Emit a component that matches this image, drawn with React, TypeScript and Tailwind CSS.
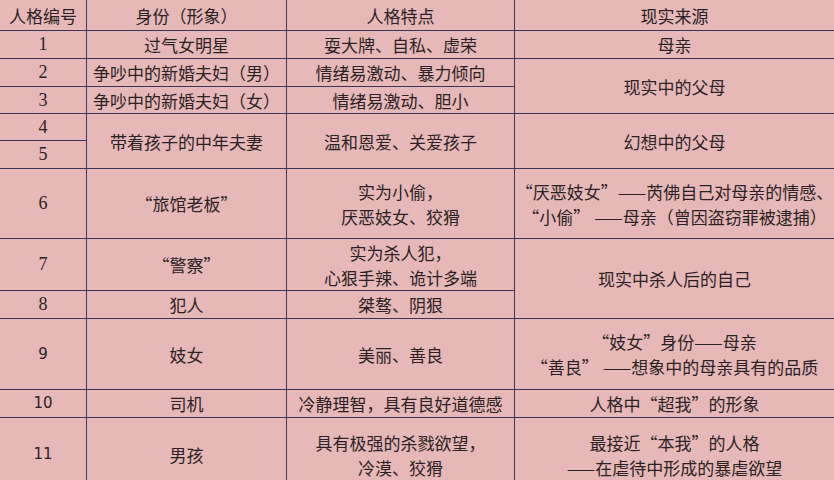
import type { ReactNode } from 'react';

type CellProps = {
  children?: ReactNode;
  className?: string;
  last?: boolean;
  bottom?: boolean;
};

// one grid cell; borders only on the inner edges, the outer frame is cut off in the picture
const Cell = ({ children, className = '', last = false, bottom = true }: CellProps) => (
  <div
    className={`flex flex-col items-center justify-center text-center whitespace-nowrap overflow-hidden ${
      last ? '' : 'border-r'
    } ${bottom ? 'border-b' : ''} border-[#3d3556] ${className}`}
  >
    {children}
  </div>
);

const Num = ({ n, sans = false, bottom = true }: { n: string; sans?: boolean; bottom?: boolean }) => (
  <Cell
    bottom={bottom}
    className={
      sans
        ? "font-['DejaVu_Sans',sans-serif] text-[15px]"
        : "font-['Liberation_Serif',serif] text-[18px]"
    }
  >
    {n}
  </Cell>
);

const App = () => {
  return (
    <div className="w-[834px] h-[480px] overflow-hidden bg-[#e6b8b7]">
      <div
        className="grid w-[834px] grid-cols-[87px_200px_228px_1fr] grid-rows-[31px_28px_28px_27px_27px_28px_70px_52px_28px_71px_28px_73px] text-[17px] leading-[25px] text-[#2b2323] font-['Noto_Sans_CJK_SC',sans-serif]"
      >
        {/* header */}
        <Cell>人格编号</Cell>
        <Cell>身份（形象）</Cell>
        <Cell>人格特点</Cell>
        <Cell last>现实来源</Cell>

        {/* 1 */}
        <Num n="1" />
        <Cell>过气女明星</Cell>
        <Cell>耍大牌、自私、虚荣</Cell>
        <Cell last>母亲</Cell>

        {/* 2 */}
        <Num n="2" />
        <Cell>争吵中的新婚夫妇（男）</Cell>
        <Cell>情绪易激动、暴力倾向</Cell>
        <Cell last className="row-span-2">现实中的父母</Cell>

        {/* 3 */}
        <Num n="3" />
        <Cell>争吵中的新婚夫妇（女）</Cell>
        <Cell>情绪易激动、胆小</Cell>

        {/* 4 + 5 */}
        <Num n="4" />
        <Cell className="row-span-2">带着孩子的中年夫妻</Cell>
        <Cell className="row-span-2">温和恩爱、关爱孩子</Cell>
        <Cell last className="row-span-2">幻想中的父母</Cell>
        <Num n="5" />

        {/* 6 */}
        <Num n="6" />
        <Cell>“旅馆老板”</Cell>
        <Cell>
          <span>实为小偷，</span>
          <span>厌恶妓女、狡猾</span>
        </Cell>
        <Cell last>
          <span>“厌恶妓女”——芮佛自己对母亲的情感、</span>
          <span>“小偷” ——母亲（曾因盗窃罪被逮捕）</span>
        </Cell>

        {/* 7 */}
        <Num n="7" />
        <Cell>“警察”</Cell>
        <Cell>
          <span>实为杀人犯，</span>
          <span>心狠手辣、诡计多端</span>
        </Cell>
        <Cell last className="row-span-2">现实中杀人后的自己</Cell>

        {/* 8 */}
        <Num n="8" />
        <Cell>犯人</Cell>
        <Cell>桀骜、阴狠</Cell>

        {/* 9 */}
        <Num n="9" sans />
        <Cell>妓女</Cell>
        <Cell>美丽、善良</Cell>
        <Cell last>
          <span>“妓女”身份——母亲</span>
          <span>“善良” ——想象中的母亲具有的品质</span>
        </Cell>

        {/* 10 */}
        <Num n="10" sans />
        <Cell>司机</Cell>
        <Cell>冷静理智，具有良好道德感</Cell>
        <Cell last>人格中“超我”的形象</Cell>

        {/* 11 */}
        <Num n="11" sans bottom={false} />
        <Cell bottom={false}>男孩</Cell>
        <Cell bottom={false}>
          <span>具有极强的杀戮欲望，</span>
          <span>冷漠、狡猾</span>
        </Cell>
        <Cell last bottom={false}>
          <span>最接近“本我”的人格</span>
          <span>——在虐待中形成的暴虐欲望</span>
        </Cell>
      </div>
    </div>
  );
};

export default App;
